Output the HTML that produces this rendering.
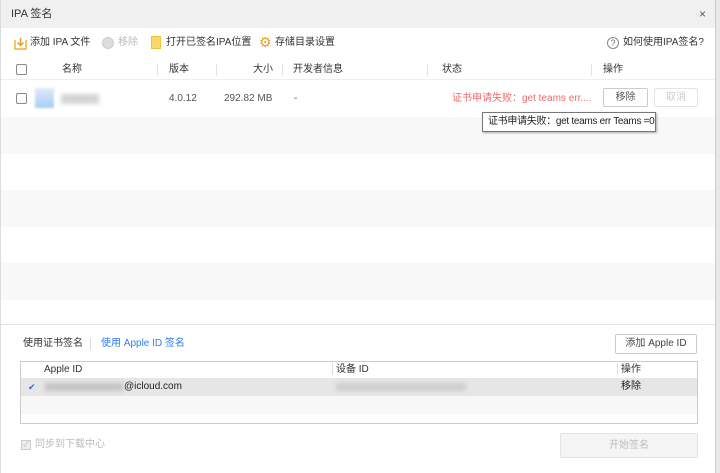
<!DOCTYPE html>
<html><head><meta charset="utf-8"><style>
*{margin:0;padding:0;box-sizing:border-box}
body{width:720px;height:473px;overflow:hidden;background:#fff;font-family:"Liberation Sans","Noto Sans CJK SC",sans-serif;font-size:10px;color:#333;position:relative}
.a{position:absolute;white-space:nowrap;line-height:12px}
.stripe{position:absolute;left:1px;width:714px;height:37px;background:#f8f8f8}
.cb{position:absolute;width:11px;height:11px;border:1px solid #888;border-radius:2px;background:#fff}
.btn{position:absolute;border:1px solid #ccc;background:#fff;text-align:center;border-radius:2px}
.sep{position:absolute;width:1px;height:12px;background:#e3e3e3;top:64px}
</style></head><body>
<div class="a" style="left:0;top:0;width:716px;height:28px;background:#f0f0f0"></div>
<div class="a" style="left:716px;top:0;width:4px;height:473px;background:#e8e8e8"></div>
<div class="a" style="left:715px;top:0;width:1px;height:473px;background:#ccc"></div>
<div class="a" style="left:0;top:0;width:1px;height:473px;background:#ddd"></div>
<div class="a" style="left:11px;top:8px;font-size:11px;color:#333">IPA 签名</div>
<div class="a" style="left:699px;top:8px;font-size:12px;color:#555">×</div>

<svg class="a" style="left:14px;top:37px" width="13" height="13"><path d="M1 3 V12 H12 V3" fill="none" stroke="#f0b43c" stroke-width="1.5"/><path d="M6.5 1 V8 M3.5 5.5 L6.5 8.5 L9.5 5.5" fill="none" stroke="#e8a020" stroke-width="1.5"/></svg>
<div class="a" style="left:30px;top:37px">添加 IPA 文件</div>
<div class="a" style="left:102px;top:37px;width:12px;height:12px;border-radius:50%;background:#ddd;border:1px solid #ccc"></div>
<div class="a" style="left:118px;top:37px;color:#bbb">移除</div>
<div class="a" style="left:151px;top:36px;width:10px;height:13px;background:#fbd76a;border:1px solid #f0c040"></div>
<div class="a" style="left:166px;top:37px">打开已签名IPA位置</div>
<div class="a" style="left:259px;top:35px;font-size:14px;line-height:14px;color:#e8a020">⚙</div>
<div class="a" style="left:275px;top:37px">存储目录设置</div>
<div class="a" style="left:607px;top:37px;width:12px;height:12px;border-radius:50%;border:1px solid #888;font-size:9px;text-align:center;line-height:10px;color:#666">?</div>
<div class="a" style="left:623px;top:37px">如何使用IPA签名?</div>

<div class="a" style="left:1px;top:79px;width:714px;height:1px;background:#eee"></div>
<div class="cb" style="left:16px;top:64px"></div>
<div class="a" style="left:62px;top:64px">名称</div>
<div class="sep" style="left:157px"></div>
<div class="a" style="left:169px;top:64px">版本</div>
<div class="sep" style="left:216px"></div>
<div class="a" style="left:253px;top:64px">大小</div>
<div class="sep" style="left:282px"></div>
<div class="a" style="left:293px;top:64px">开发者信息</div>
<div class="sep" style="left:427px"></div>
<div class="a" style="left:442px;top:64px">状态</div>
<div class="sep" style="left:591px"></div>
<div class="a" style="left:603px;top:64px">操作</div>

<div class="stripe" style="top:117px"></div>
<div class="stripe" style="top:190px"></div>
<div class="stripe" style="top:263px"></div>

<div class="cb" style="left:16px;top:93px"></div>
<div class="a" style="left:35px;top:88px;width:19px;height:20px;background:linear-gradient(#dfeaf8,#a9cdf5);filter:blur(1px)"></div>
<div class="a" style="left:61px;top:94px;width:38px;height:10px;background:#d4d4d4;filter:blur(2px)"></div>
<div class="a" style="left:169px;top:93px;color:#555">4.0.12</div>
<div class="a" style="left:224px;top:93px;color:#555">292.82 MB</div>
<div class="a" style="left:294px;top:93px;color:#555">-</div>
<div class="a" style="left:452px;top:93px;color:#f06a6a">证书申请失败：get teams err....</div>
<div class="btn" style="left:603px;top:88px;width:45px;height:19px;line-height:17px;color:#555">移除</div>
<div class="btn" style="left:654px;top:88px;width:44px;height:19px;line-height:17px;color:#ccc;border-color:#e3e3e3">取消</div>
<div class="a" style="left:482px;top:112px;width:174px;height:20px;border:1px solid #777;background:#fff;box-shadow:1px 1px 2px #aaa;font-size:10px;line-height:18px;padding-left:5px;color:#222;letter-spacing:-0.3px">证书申请失败：get teams err Teams =0</div>

<div class="a" style="left:1px;top:324px;width:714px;height:1px;background:#e5e5e5"></div>
<div class="a" style="left:23px;top:338px">使用证书签名</div>
<div class="a" style="left:90px;top:338px;width:1px;height:12px;background:#ddd"></div>
<div class="a" style="left:101px;top:338px;color:#2d7cf0">使用 Apple ID 签名</div>
<div class="btn" style="left:615px;top:334px;width:82px;height:20px;line-height:18px;color:#444">添加 Apple ID</div>

<div class="a" style="left:20px;top:361px;width:678px;height:63px;border:1px solid #ccc"></div>
<div class="a" style="left:44px;top:364px">Apple ID</div>
<div class="a" style="left:332px;top:363px;width:1px;height:12px;background:#ddd"></div>
<div class="a" style="left:336px;top:364px">设备 ID</div>
<div class="a" style="left:617px;top:363px;width:1px;height:12px;background:#ddd"></div>
<div class="a" style="left:621px;top:364px">操作</div>
<div class="a" style="left:21px;top:378px;width:676px;height:18px;background:#e6e6e6"></div>
<div class="a" style="left:21px;top:396px;width:676px;height:18px;background:#f7f7f7"></div>
<div class="a" style="left:28px;top:381px;color:#2d6cd0;font-size:9px">✔</div>
<div class="a" style="left:45px;top:383px;width:78px;height:8px;background:#c4c4c4;filter:blur(2px)"></div>
<div class="a" style="left:124px;top:381px;color:#222">@icloud.com</div>
<div class="a" style="left:336px;top:383px;width:130px;height:8px;background:#cfcfcf;filter:blur(2px)"></div>
<div class="a" style="left:621px;top:381px;color:#222">移除</div>

<div class="a" style="left:21px;top:440px;width:10px;height:10px;border:1px solid #ccc;background:#eee;font-size:8px;color:#bbb;line-height:8px;text-align:center">✓</div>
<div class="a" style="left:35px;top:439px;color:#bbb">同步到下载中心</div>
<div class="btn" style="left:560px;top:433px;width:138px;height:25px;line-height:23px;color:#bbb;background:#f5f5f5;border-color:#e3e3e3">开始签名</div>
</body></html>
